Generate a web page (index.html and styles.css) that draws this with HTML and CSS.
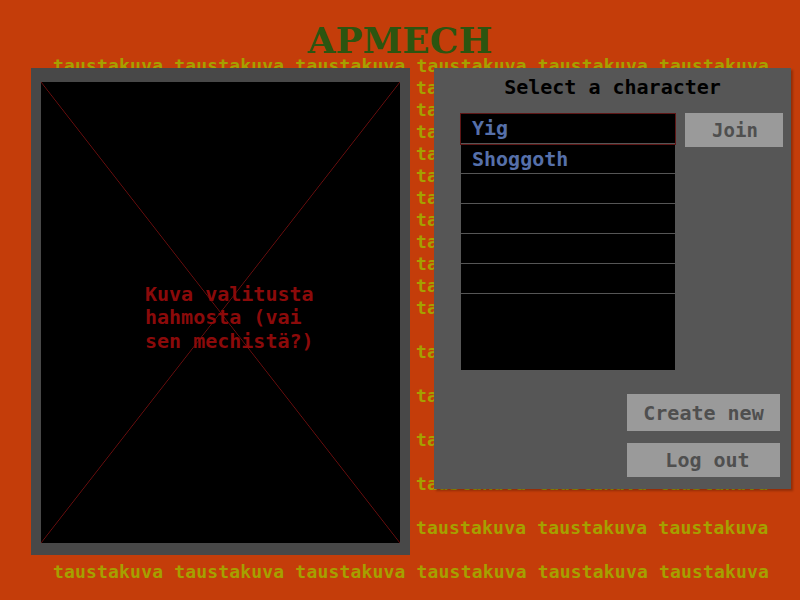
FILE: index.html
```html
<!DOCTYPE html>
<html lang="fi">
<head>
<meta charset="utf-8">
<title>APMECH</title>
<link rel="stylesheet" href="styles.css">
</head>
<body>
<div class="stage">
  <div class="bg">
    <div class="ln">taustakuva taustakuva taustakuva taustakuva taustakuva taustakuva</div>
    <div class="ln in">taustakuva taustakuva taustakuva</div>
    <div class="ln in">taustakuva taustakuva taustakuva</div>
    <div class="ln in">taustakuva taustakuva taustakuva</div>
    <div class="ln in">taustakuva taustakuva taustakuva</div>
    <div class="ln in">taustakuva taustakuva taustakuva</div>
    <div class="ln in">taustakuva taustakuva taustakuva</div>
    <div class="ln in">taustakuva taustakuva taustakuva</div>
    <div class="ln in">taustakuva taustakuva taustakuva</div>
    <div class="ln in">taustakuva taustakuva taustakuva</div>
    <div class="ln in">taustakuva taustakuva taustakuva</div>
    <div class="ln in">taustakuva taustakuva taustakuva</div>
    <div class="ln in gap">taustakuva taustakuva taustakuva</div>
    <div class="ln in gap">taustakuva taustakuva taustakuva</div>
    <div class="ln in gap">taustakuva taustakuva taustakuva</div>
    <div class="ln in gap">taustakuva taustakuva taustakuva</div>
    <div class="ln in gap">taustakuva taustakuva taustakuva</div>
    <div class="ln gap">taustakuva taustakuva taustakuva taustakuva taustakuva taustakuva</div>
  </div>

  <div class="fg">
    <h1 class="title">APMECH</h1>
    <div class="row">
      <section class="preview">
        <div class="preview-box">
          <p class="preview-text">Kuva valitusta hahmosta (vai sen mechistä?)</p>
        </div>
      </section>

      <section class="select">
        <h2 class="select-title">Select a character</h2>
        <div class="select-body">
          <ul class="chars">
            <li class="char selected">Yig</li>
            <li class="char">Shoggoth</li>
            <li class="char"></li>
            <li class="char"></li>
            <li class="char"></li>
            <li class="char"></li>
          </ul>
          <button class="btn btn-join">Join</button>
        </div>
        <div class="actions">
          <button class="btn btn-create">Create new</button>
          <button class="btn btn-logout">Log out</button>
        </div>
      </section>
    </div>
  </div>
</div>
</body>
</html>
```

FILE: styles.css
```css
html, body {
  margin: 0;
  padding: 0;
}

body {
  width: 800px;
  height: 600px;
  overflow: hidden;
  background: #c43d0a;
  font-family: "DejaVu Sans Mono", "Liberation Mono", monospace;
}

.stage {
  display: grid;
  width: 800px;
  height: 600px;
}

.bg,
.fg {
  grid-area: 1 / 1;
}

/* background "image" text */
.bg {
  padding-top: 55px;
  padding-left: 53px;
  color: #a6a000;
  font-weight: bold;
  font-size: 18px;
  line-height: 22px;
  letter-spacing: 0.18px;
  white-space: nowrap;
  overflow: hidden;
}

.ln.in {
  padding-left: 363px;
}

.ln.gap {
  margin-top: 22px;
}

/* foreground */
.fg {
  position: relative;
  padding-top: 20px;
}

.title {
  margin: 0;
  height: 40px;
  text-align: center;
  font-family: "DejaVu Serif", "Liberation Serif", serif;
  font-weight: bold;
  font-size: 36px;
  line-height: 40px;
  color: #2c5510;
}

.row {
  display: flex;
  align-items: flex-start;
  margin-top: 8px;
}

/* left preview panel */
.preview {
  margin-left: 31px;
  width: 379px;
  height: 487px;
  box-sizing: border-box;
  padding: 14px 10px 12px 10px;
  background: #484848;
  display: flex;
}

.preview-box {
  flex: 1;
  display: flex;
  align-items: center;
  padding-left: 104px;
  padding-top: 11px;
  background:
    linear-gradient(to top right, transparent calc(50% - 0.7px), #6e0d0d 50%, transparent calc(50% + 0.7px)),
    linear-gradient(to bottom right, transparent calc(50% - 0.7px), #6e0d0d 50%, transparent calc(50% + 0.7px)),
    #000;
}

.preview-text {
  margin: 0;
  width: 170px;
  color: #8b0a0a;
  font-weight: bold;
  font-size: 20px;
  line-height: 23.5px;
}

/* right select panel */
.select {
  margin-left: 24px;
  width: 357px;
  height: 421px;
  box-sizing: border-box;
  padding: 7px 8px 12px 27px;
  background: #565656;
  box-shadow: 2px 2px 2px rgba(0, 0, 0, 0.25);
  display: flex;
  flex-direction: column;
}

.select-title {
  margin: 0 0 14px -19px;
  text-align: center;
  font-size: 20px;
  line-height: 24px;
  font-weight: bold;
  color: #000;
}

.select-body {
  display: flex;
  align-items: flex-start;
  gap: 10px;
}

.chars {
  list-style: none;
  margin: 0;
  padding: 1px 0 0 0;
  width: 214px;
  height: 257px;
  flex: none;
  box-sizing: border-box;
  background: #000;
}

.char {
  height: 30px;
  box-sizing: border-box;
  border-bottom: 1px solid #555;
  padding-left: 11px;
  color: #5670aa;
  font-weight: bold;
  font-size: 20px;
  line-height: 31px;
}

.char.selected {
  outline: 1px solid #5e1616;
  line-height: 29px;
}

.btn {
  border: none;
  margin: 0;
  padding: 0;
  background: #9a9a9a;
  color: #4f4f4f;
  font-family: "DejaVu Sans Mono", "Liberation Mono", monospace;
  font-weight: bold;
  font-size: 20px;
  text-align: center;
}

.btn-join {
  flex: none;
  width: 98px;
  height: 34px;
  font-size: 19px;
  padding-left: 2px;
}

.actions {
  margin-top: 24px;
  margin-right: 3px;
  display: flex;
  flex-direction: column;
  align-items: flex-end;
  gap: 12px;
}

.btn-create {
  width: 153px;
  height: 37px;
}

.btn-logout {
  width: 153px;
  height: 34px;
  padding-left: 8px;
}
```
